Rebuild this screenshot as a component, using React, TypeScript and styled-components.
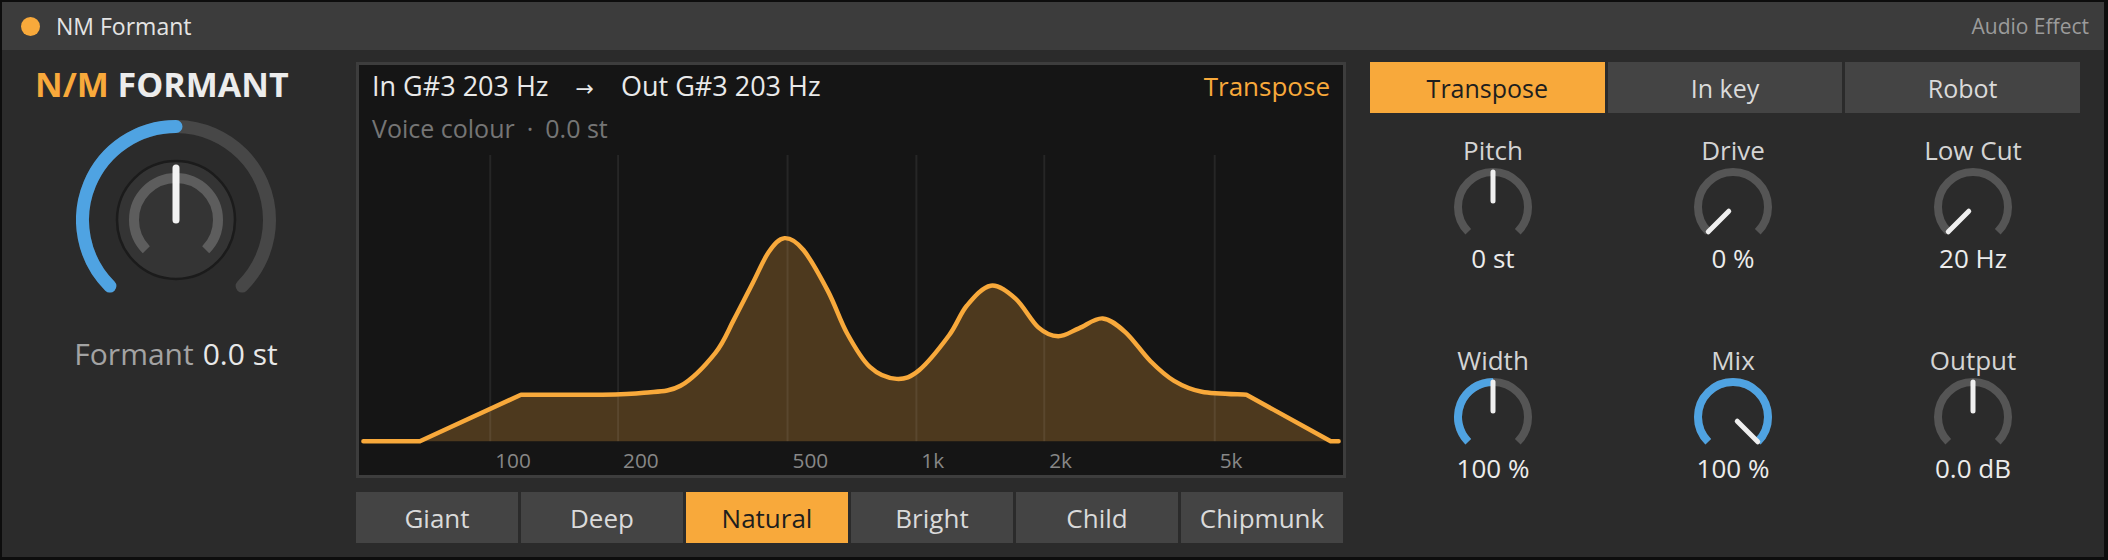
import React from "react";
import styled, { createGlobalStyle } from "styled-components";

const FONT = `"Open Sans", "Noto Sans", "Liberation Sans", sans-serif`;
const ORANGE = "#f8a93b";
const BLUE = "#4fa3e2";

const Global = createGlobalStyle`
  html, body { margin: 0; padding: 0; background: #0d0d0d; }
  body { font-family: ${FONT}; }
  * { box-sizing: border-box; }
`;

const Frame = styled.div`
  width: 2108px;
  height: 560px;
  padding: 2px 4px 3px 2px;
  background: #0d0d0d;
  display: flex;
`;

const Window = styled.div`
  flex: 1;
  min-width: 0;
  display: flex;
  flex-direction: column;
  background: #2b2b2b;
`;

const TitleBar = styled.header`
  height: 48px;
  flex: none;
  display: flex;
  align-items: center;
  background: #3c3c3c;
  padding: 0 15px 0 19px;
`;

const Dot = styled.span`
  width: 19px;
  height: 19px;
  border-radius: 50%;
  background: ${ORANGE};
  flex: none;
`;

const Title = styled.span`
  margin-left: 16px;
  font-size: 23px;
  color: #e4e4e4;
`;

const Kind = styled.span`
  margin-left: auto;
  font-size: 21px;
  color: #9b9b9b;
`;

const Body = styled.main`
  flex: 1;
  display: flex;
  min-height: 0;
`;

/* ---------- left column ---------- */
const LeftCol = styled.section`
  width: 354px;
  flex: none;
  display: flex;
  flex-direction: column;
  align-items: flex-start;
  padding-left: 33px;
`;

const Brand = styled.h1`
  margin: 14px 0 0;
  font-size: 34px;
  line-height: 40px;
  font-weight: 700;
  color: #ececec;
  white-space: nowrap;
`;

const BrandAccent = styled.span`
  color: ${ORANGE};
`;

const BigKnobBlock = styled.div`
  width: 200px;
  margin: 16px 0 0 41px;
  display: flex;
  flex-direction: column;
  align-items: center;
`;

const BigReadout = styled.div`
  margin-top: 16px;
  width: 100%;
  display: flex;
  justify-content: center;
  font-size: 30px;
  line-height: 36px;
  white-space: nowrap;
  color: #a3a3a3;
`;

const ReadoutValue = styled.span`
  color: #e8e8e8;
  margin-left: 9px;
`;

/* ---------- middle column ---------- */
const MidCol = styled.section`
  width: 990px;
  flex: none;
  padding-top: 12px;
  display: flex;
  flex-direction: column;
  gap: 14px;
`;

const Display = styled.div`
  height: 416px;
  border: 3px solid #3d3d3d;
  background: #151515;
  display: flex;
  flex-direction: column;
`;

const DisplayHead = styled.div`
  padding: 6px 13px 0;
`;

const PitchRow = styled.div`
  display: flex;
  justify-content: space-between;
  font-size: 26px;
  line-height: 30px;
  color: #e9e9e9;
  white-space: nowrap;
`;

const PitchText = styled.span`
  font-size: 27px;
`;

const Arrow = styled.span`
  margin: 0 27px;
  font-family: "DejaVu Sans", ${FONT};
  font-size: 22px;
`;

const ModeTag = styled.span`
  color: ${ORANGE};
`;

const SubRow = styled.div`
  margin-top: 10px;
  font-size: 25px;
  line-height: 28px;
  color: #757575;
  white-space: nowrap;
`;

const Sep = styled.span`
  margin: 0 12px;
`;

const Plot = styled.svg`
  display: block;
  width: 984px;
  height: 336px;
  text {
    font-family: ${FONT};
    font-size: 21px;
    fill: #878787;
  }
`;

const SegRow = styled.div<{ $cols: number; $width: number }>`
  width: ${(p) => p.$width}px;
  height: 51px;
  display: grid;
  grid-template-columns: repeat(${(p) => p.$cols}, 1fr);
  gap: 3px;
`;

const SegButton = styled.button<{ $active?: boolean; $size: number }>`
  border: none;
  margin: 0;
  padding: 0;
  font-family: ${FONT};
  font-size: ${(p) => p.$size}px;
  background: ${(p) => (p.$active ? ORANGE : "#444444")};
  color: ${(p) => (p.$active ? "#1e1e1e" : "#dadada")};
  cursor: pointer;
`;

/* ---------- right column ---------- */
const RightCol = styled.section`
  flex: 1;
  margin-left: 24px;
  padding-top: 12px;
  display: flex;
  flex-direction: column;
`;

const KnobGrid = styled.div`
  margin: 22px 0 0 3px;
  display: grid;
  grid-template-columns: repeat(3, 240px);
  row-gap: 72px;
`;

const KnobCell = styled.div`
  display: flex;
  flex-direction: column;
  align-items: center;
`;

const KnobLabel = styled.div`
  font-size: 26px;
  line-height: 30px;
  color: #d4d4d4;
  white-space: nowrap;
`;

const KnobValue = styled.div`
  margin-top: 2px;
  font-size: 26px;
  line-height: 30px;
  color: #ececec;
  white-space: nowrap;
`;

const KnobSvg = styled.svg`
  display: block;
  margin: 2px 0;
`;

/* ---------- helpers ---------- */
function polar(cx: number, cy: number, r: number, deg: number): [number, number] {
  const a = (deg * Math.PI) / 180;
  return [cx + r * Math.sin(a), cy - r * Math.cos(a)];
}

function arcPath(cx: number, cy: number, r: number, t0: number, t1: number) {
  const a0 = -135 + 270 * t0;
  const a1 = -135 + 270 * t1;
  const [x0, y0] = polar(cx, cy, r, a0);
  const [x1, y1] = polar(cx, cy, r, a1);
  const large = a1 - a0 > 180 ? 1 : 0;
  return `M ${x0.toFixed(2)} ${y0.toFixed(2)} A ${r} ${r} 0 ${large} 1 ${x1.toFixed(2)} ${y1.toFixed(2)}`;
}

type KnobProps = { value: number; blue?: [number, number] };

function SmallKnob({ value, blue }: KnobProps) {
  const cx = 40;
  const cy = 40;
  const a = -135 + 270 * value;
  const [x0, y0] = polar(cx, cy, 6, a);
  const [x1, y1] = polar(cx, cy, 35, a);
  return (
    <KnobSvg width={80} height={72} viewBox="0 0 80 72">
      <path d={arcPath(cx, cy, 35, 0, 1)} fill="none" stroke="#555555" strokeWidth={8} />
      {blue && (
        <path d={arcPath(cx, cy, 35, blue[0], blue[1])} fill="none" stroke={BLUE} strokeWidth={8} />
      )}
      <line x1={x0} y1={y0} x2={x1} y2={y1} stroke="#efefef" strokeWidth={5} strokeLinecap="round" />
    </KnobSvg>
  );
}

function BigKnob() {
  const c = 100;
  return (
    <svg width={200} height={200} viewBox="0 0 200 200" style={{ display: "block" }}>
      <path d={arcPath(c, c, 93.5, 0, 1)} fill="none" stroke="#474747" strokeWidth={13} strokeLinecap="round" />
      <path d={arcPath(c, c, 93.5, 0, 0.5)} fill="none" stroke={BLUE} strokeWidth={13} strokeLinecap="round" />
      <circle cx={c} cy={c} r={59} fill="#343434" stroke="#1b1b1b" strokeWidth={2.5} />
      <path d={arcPath(c, c, 42, 0, 1)} fill="none" stroke="#5d5d5d" strokeWidth={10} />
      <line x1={c} y1={c} x2={c} y2={48} stroke="#f2f2f2" strokeWidth={7} strokeLinecap="round" />
    </svg>
  );
}

type Pt = [number, number];

function smoothPath(pts: Pt[]) {
  let d = "";
  for (let i = 0; i < pts.length - 1; i++) {
    const p0 = pts[i - 1] || pts[i];
    const p1 = pts[i];
    const p2 = pts[i + 1];
    const p3 = pts[i + 2] || p2;
    const c1: Pt = [p1[0] + (p2[0] - p0[0]) / 6, p1[1] + (p2[1] - p0[1]) / 6];
    const c2: Pt = [p2[0] - (p3[0] - p1[0]) / 6, p2[1] - (p3[1] - p1[1]) / 6];
    d += ` C ${c1[0].toFixed(1)} ${c1[1].toFixed(1)} ${c2[0].toFixed(1)} ${c2[1].toFixed(1)} ${p2[0]} ${p2[1]}`;
  }
  return d;
}

const BASE = 441;
const curvePts: Pt[] = [
  [518, 394], [600, 394], [642, 392], [679, 385], [714, 352], [733, 318], [752, 281],
  [768, 250], [784, 236], [803, 248], [828, 290], [847, 332], [870, 366], [897, 378],
  [920, 369], [950, 334], [968, 304], [992, 284], [1017, 297], [1040, 326], [1060, 335],
  [1081, 327], [1105, 317], [1128, 331], [1153, 360], [1177, 380], [1205, 391], [1250, 394],
];

const curveD =
  `M 359 ${BASE} L 416 ${BASE} L 518 394` + smoothPath(curvePts) + ` L 1335 ${BASE} L 1343 ${BASE}`;

const grid: { x: number; label: string }[] = [
  { x: 487, label: "100" },
  { x: 616, label: "200" },
  { x: 787, label: "500" },
  { x: 917, label: "1k" },
  { x: 1046, label: "2k" },
  { x: 1218, label: "5k" },
];

function Spectrum() {
  return (
    <Plot viewBox="359 139 984 336">
      <path d={curveD + " Z"} fill="rgba(248,169,59,0.25)" stroke="none" />
      {grid.map((g) => (
        <line key={g.x} x1={g.x} y1={152} x2={g.x} y2={BASE} stroke="rgba(255,255,255,0.075)" strokeWidth={2} />
      ))}
      <path d={curveD} fill="none" stroke={ORANGE} strokeWidth={4.5} strokeLinejoin="round" strokeLinecap="round" />
      {grid.map((g) => (
        <text key={g.label} x={g.x + 5} y={468}>
          {g.label}
        </text>
      ))}
    </Plot>
  );
}

const presets = ["Giant", "Deep", "Natural", "Bright", "Child", "Chipmunk"];
const modes = ["Transpose", "In key", "Robot"];

const knobs: { label: string; value: string; t: number; blue?: [number, number] }[] = [
  { label: "Pitch", value: "0 st", t: 0.5 },
  { label: "Drive", value: "0 %", t: 0 },
  { label: "Low Cut", value: "20 Hz", t: 0 },
  { label: "Width", value: "100 %", t: 0.5, blue: [0, 0.5] },
  { label: "Mix", value: "100 %", t: 1, blue: [0, 1] },
  { label: "Output", value: "0.0 dB", t: 0.5 },
];

export default function App() {
  return (
    <>
      <Global />
      <Frame>
        <Window>
          <TitleBar>
            <Dot />
            <Title>NM Formant</Title>
            <Kind>Audio Effect</Kind>
          </TitleBar>
          <Body>
            <LeftCol>
              <Brand>
                <BrandAccent>N/M</BrandAccent> FORMANT
              </Brand>
              <BigKnobBlock>
                <BigKnob />
                <BigReadout>
                  Formant<ReadoutValue>0.0 st</ReadoutValue>
                </BigReadout>
              </BigKnobBlock>
            </LeftCol>

            <MidCol>
              <Display>
                <DisplayHead>
                  <PitchRow>
                    <PitchText>
                      In G#3 203 Hz<Arrow>→</Arrow>Out G#3 203 Hz
                    </PitchText>
                    <ModeTag>Transpose</ModeTag>
                  </PitchRow>
                  <SubRow>
                    Voice colour<Sep>·</Sep>0.0 st
                  </SubRow>
                </DisplayHead>
                <Spectrum />
              </Display>
              <SegRow $cols={6} $width={987}>
                {presets.map((p) => (
                  <SegButton key={p} $size={26} $active={p === "Natural"}>
                    {p}
                  </SegButton>
                ))}
              </SegRow>
            </MidCol>

            <RightCol>
              <SegRow $cols={3} $width={710}>
                {modes.map((m) => (
                  <SegButton key={m} $size={25} $active={m === "Transpose"}>
                    {m}
                  </SegButton>
                ))}
              </SegRow>
              <KnobGrid>
                {knobs.map((k) => (
                  <KnobCell key={k.label}>
                    <KnobLabel>{k.label}</KnobLabel>
                    <SmallKnob value={k.t} blue={k.blue} />
                    <KnobValue>{k.value}</KnobValue>
                  </KnobCell>
                ))}
              </KnobGrid>
            </RightCol>
          </Body>
        </Window>
      </Frame>
    </>
  );
}
